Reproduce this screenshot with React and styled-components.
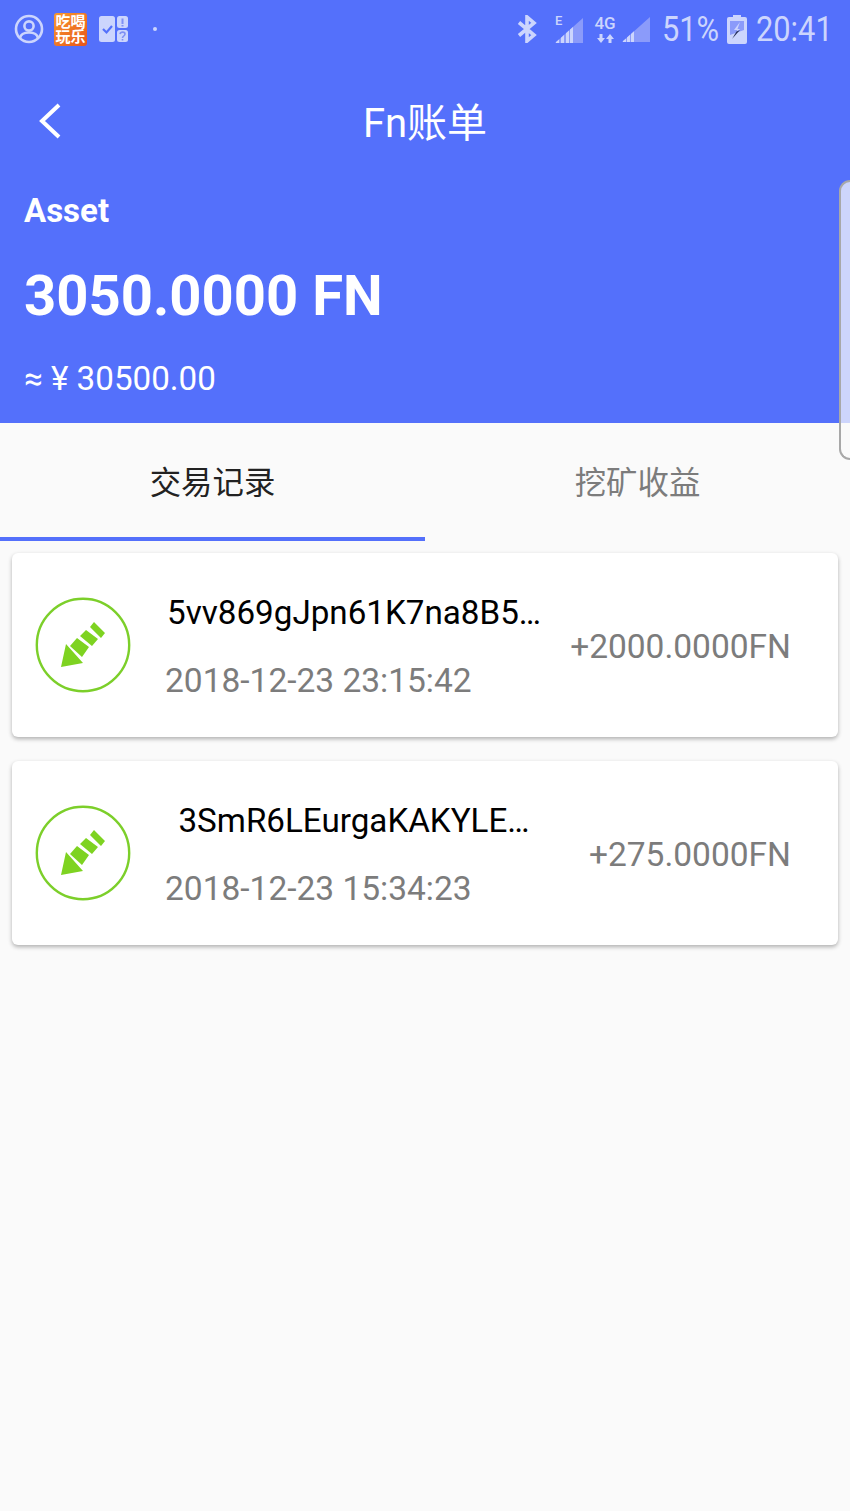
import React from "react";
import styled, { createGlobalStyle } from "styled-components";

const blue = "#5470fb";
const statusTint = "#ccd5fd";
const sans = `Roboto, "Noto Sans CJK SC", sans-serif`;

const records = [
  { address: "5vv869gJpn61K7na8B5…", date: "2018-12-23 23:15:42", amount: "+2000.0000FN" },
  { address: "3SmR6LEurgaKAKYLE…", date: "2018-12-23 15:34:23", amount: "+275.0000FN" },
];

function ReceiveIcon() {
  return (
    <svg width="96" height="96" viewBox="0 0 96 96">
      <circle cx="48" cy="48" r="46.2" fill="none" stroke="#7ccf2a" strokeWidth="2.4" />
      <path
        fill="#7ed321"
        d="M26 70 L31 47 L48 66 Z M35 49 L42 41 L54 50 L47 60 Z M45 39 L51 33 L63 42 L57 49 Z M55 30 L59 25 L70 36 L66 41 Z"
      />
    </svg>
  );
}

function ProfileIcon() {
  return (
    <svg width="30" height="30" viewBox="0 0 30 30" fill="none" stroke={statusTint} strokeWidth="2.6">
      <circle cx="15" cy="15" r="13" />
      <circle cx="15" cy="12" r="4.6" />
      <path d="M6 24 C7 19 11 18.5 15 18.5 C19 18.5 23 19 24 24" />
    </svg>
  );
}

function ChecklistIcon() {
  return (
    <svg width="29" height="26" viewBox="0 0 29 26">
      <rect x="0" y="0" width="16" height="26" rx="2.5" fill={statusTint} />
      <rect x="18" y="0" width="11" height="12" rx="2.5" fill={statusTint} />
      <rect x="18" y="14" width="11" height="12" rx="2.5" fill={statusTint} />
      <path d="M4 13 L7.5 16.5 L13 10" fill="none" stroke={blue} strokeWidth="2.2" />
      <path d="M23.5 2.5 V8 M23.5 9 V10.5" stroke="#7f90f5" strokeWidth="2" />
      <path d="M21 18 C21.5 15.5 26 15.5 26 18 C26 20 23.5 20 23.5 22 M23.5 23 V24.5" fill="none" stroke="#7f90f5" strokeWidth="1.6" />
    </svg>
  );
}

function BluetoothIcon() {
  return (
    <svg width="20" height="28" viewBox="0 0 20 28" fill="none" stroke={statusTint} strokeWidth="3.6">
      <path d="M2 7.5 L17 20 L10 26 V2 L17 8 L2 20.5" />
    </svg>
  );
}

function DataArrowsIcon() {
  return (
    <svg width="17" height="9" viewBox="0 0 17 9" fill={statusTint}>
      <path d="M2.5 0 H5.5 V4 H8 L4 9 L0 4 H2.5 Z" />
      <path d="M13 0 L17 5 H14.5 V9 H11.5 V5 H9 Z" />
    </svg>
  );
}

// faint full triangle with the lit bars cut to its slope
function SignalIcon({ bars }) {
  const slope = (x) => 25 - (x * 25) / 28;
  return (
    <svg width="28" height="25" viewBox="0 0 28 25">
      <path d="M0 25 L28 0 V25 Z" fill="#8b9bfa" />
      {bars.map(([from, to]) => (
        <polygon
          key={from}
          points={`${from},25 ${from},${slope(from)} ${to},${slope(to)} ${to},25`}
          fill={statusTint}
        />
      ))}
    </svg>
  );
}

function BatteryIcon() {
  return (
    <svg width="20" height="29" viewBox="0 0 20 29">
      <rect x="6" y="0" width="8" height="3" fill={statusTint} />
      <rect x="0" y="2" width="20" height="27" rx="2" fill={statusTint} />
      <path d="M3 6 H17 V15 L3 20 Z" fill="#8b9bfa" />
      <path d="M13 7 L7 15 L10.5 15 L9 18 L13 14 L10.5 14 Z" fill={statusTint} />
      <path d="M9.5 16.5 L5 24 L13 15 Z" fill="#27305c" />
    </svg>
  );
}

function BackIcon() {
  return (
    <svg width="24" height="36" viewBox="0 0 24 36" fill="none" stroke="#fff" strokeWidth="4">
      <path d="M21 2 L4 18 L21 34" />
    </svg>
  );
}

export default function App() {
  return (
    <>
      <GlobalStyle />
      <Page>
        <Hero>
          <StatusBar>
            <StatusGroup>
              <ProfileIcon />
              <StatusSlot $left={10}>
                <AppBadge>
                  吃喝
                  <br />
                  玩乐
                </AppBadge>
              </StatusSlot>
              <StatusSlot $left={12}>
                <ChecklistIcon />
              </StatusSlot>
              <StatusSlot $left={25}>
                <StatusDot />
              </StatusSlot>
            </StatusGroup>
            <StatusGroup>
              <BluetoothIcon />
              <StatusSlot $left={18}>
                <NetworkCell>
                  <NetworkLabel>E</NetworkLabel>
                  <SignalIcon bars={[[1, 4], [6, 9], [11, 14], [15, 18]]} />
                </NetworkCell>
              </StatusSlot>
              <StatusSlot $left={11}>
                <DataCell>
                  4G
                  <DataArrowsIcon />
                </DataCell>
              </StatusSlot>
              <StatusSlot $left={6}>
                <SignalIcon bars={[[1, 4], [5, 8], [9, 12]]} />
              </StatusSlot>
              <StatusSlot $left={12}>
                <StatusText $width={55}>51%</StatusText>
              </StatusSlot>
              <StatusSlot $left={10}>
                <BatteryIcon />
              </StatusSlot>
              <StatusSlot $left={9}>
                <StatusText $width={75}>20:41</StatusText>
              </StatusSlot>
            </StatusGroup>
          </StatusBar>
          <NavBar>
            <BackButton>
              <BackIcon />
            </BackButton>
            <NavTitle>Fn账单</NavTitle>
          </NavBar>
          <AssetLabel>Asset</AssetLabel>
          <AssetValue>3050.0000 FN</AssetValue>
          <AssetFiat>≈ ¥ 30500.00</AssetFiat>
        </Hero>
        <Tabs>
          <Tab $active>交易记录</Tab>
          <Tab>挖矿收益</Tab>
        </Tabs>
        <List>
          {records.map((record) => (
            <Card key={record.address}>
              <IconWrap>
                <ReceiveIcon />
              </IconWrap>
              <CardText>
                <Address>{record.address}</Address>
                <DateText>{record.date}</DateText>
              </CardText>
              <Amount>{record.amount}</Amount>
            </Card>
          ))}
        </List>
        <EdgeHandle />
      </Page>
    </>
  );
}

const GlobalStyle = createGlobalStyle`
  html, body {
    margin: 0;
    padding: 0;
    background: #fafafa;
    font-family: ${sans};
  }
`;

const Page = styled.div`
  position: relative;
  width: 850px;
  height: 1511px;
  overflow: hidden;
  background: #fafafa;
`;

const Hero = styled.header`
  height: 423px;
  box-sizing: border-box;
  background: ${blue};
  color: #fff;
`;

const StatusBar = styled.div`
  display: flex;
  justify-content: space-between;
  align-items: center;
  height: 58px;
  padding: 0 19px 0 14px;
`;

const StatusGroup = styled.div`
  display: flex;
  align-items: center;
`;

const StatusSlot = styled.div`
  display: flex;
  margin-left: ${(p) => p.$left}px;
`;

const AppBadge = styled.div`
  width: 33px;
  height: 33px;
  border-radius: 3px;
  background: linear-gradient(135deg, #f79a2c, #e8541c);
  color: #fff;
  font-size: 15px;
  font-weight: 700;
  line-height: 15px;
  text-align: center;
  padding-top: 2px;
  box-sizing: border-box;
  white-space: nowrap;
`;

const StatusDot = styled.span`
  width: 4px;
  height: 4px;
  border-radius: 50%;
  background: ${statusTint};
`;

const NetworkCell = styled.div`
  position: relative;
  width: 28px;
  height: 25px;
  margin-top: 2px;
`;

const NetworkLabel = styled.span`
  position: absolute;
  top: -5px;
  left: 0;
  font-size: 13px;
  font-weight: 500;
  color: ${statusTint};
`;

const DataCell = styled.div`
  display: flex;
  flex-direction: column;
  align-items: center;
  gap: 3px;
  width: 22px;
  color: ${statusTint};
  font-size: 17px;
  font-weight: 500;
  line-height: 15px;
`;

const StatusText = styled.span`
  display: block;
  width: ${(p) => p.$width}px;
  padding-top: 2px;
  color: ${statusTint};
  font-size: 35px;
  line-height: 36px;
  white-space: nowrap;
  transform: scaleX(0.88);
  transform-origin: left center;
`;

const NavBar = styled.div`
  position: relative;
  display: flex;
  justify-content: center;
  align-items: center;
  height: 128px;
`;

const BackButton = styled.div`
  position: absolute;
  left: 38px;
  top: 45px;
  line-height: 0;
`;

const NavTitle = styled.h1`
  margin: 0;
  padding-top: 4px;
  font-size: 40px;
  font-weight: 400;
  line-height: 124px;
`;

const AssetLabel = styled.div`
  margin: 7px 0 0 24px;
  font-size: 33px;
  font-weight: 700;
  line-height: 36px;
`;

const AssetValue = styled.div`
  margin: 33px 0 0 24px;
  font-size: 56.2px;
  font-weight: 700;
  line-height: 68px;
`;

const AssetFiat = styled.div`
  margin: 29px 0 0 24px;
  font-size: 33.2px;
  line-height: 40px;
`;

const Tabs = styled.nav`
  display: grid;
  grid-template-columns: 1fr 1fr;
  height: 118px;
`;

const Tab = styled.div`
  display: flex;
  align-items: center;
  justify-content: center;
  font-size: 31.4px;
  color: ${(p) => (p.$active ? "#222" : "#7c7c7c")};
  border-bottom: 4px solid ${(p) => (p.$active ? blue : "transparent")};
`;

const List = styled.main`
  display: flex;
  flex-direction: column;
  gap: 24px;
  padding: 12px 12px 0;
`;

const Card = styled.article`
  display: flex;
  align-items: center;
  height: 184px;
  padding: 0 47px 0 23px;
  border-radius: 6px;
  background: #fff;
  box-shadow: 0 2px 4px rgba(0, 0, 0, 0.3);
`;

const IconWrap = styled.div`
  flex: none;
  width: 96px;
  height: 96px;
`;

const CardText = styled.div`
  display: flex;
  flex-direction: column;
  width: 378px;
  margin-left: 34px;
`;

const Address = styled.div`
  height: 40px;
  margin-top: 4px;
  font-size: 33.2px;
  line-height: 40px;
  color: #000;
  text-align: center;
  white-space: nowrap;
`;

const DateText = styled.div`
  margin-top: 28px;
  font-size: 33.5px;
  line-height: 40px;
  color: #7c7c7c;
  white-space: nowrap;
`;

const Amount = styled.div`
  margin-left: auto;
  padding-top: 2px;
  font-size: 33.5px;
  color: #7c7c7c;
  white-space: nowrap;
`;

const EdgeHandle = styled.div`
  position: absolute;
  top: 180px;
  right: 0;
  width: 11px;
  height: 280px;
  box-sizing: border-box;
  border: 2px solid #a8a8a8;
  border-right: none;
  border-radius: 12px 0 0 12px;
  background: linear-gradient(to bottom, #cdd5fc 0, #cdd5fc 241px, #fafafa 241px);
`;
